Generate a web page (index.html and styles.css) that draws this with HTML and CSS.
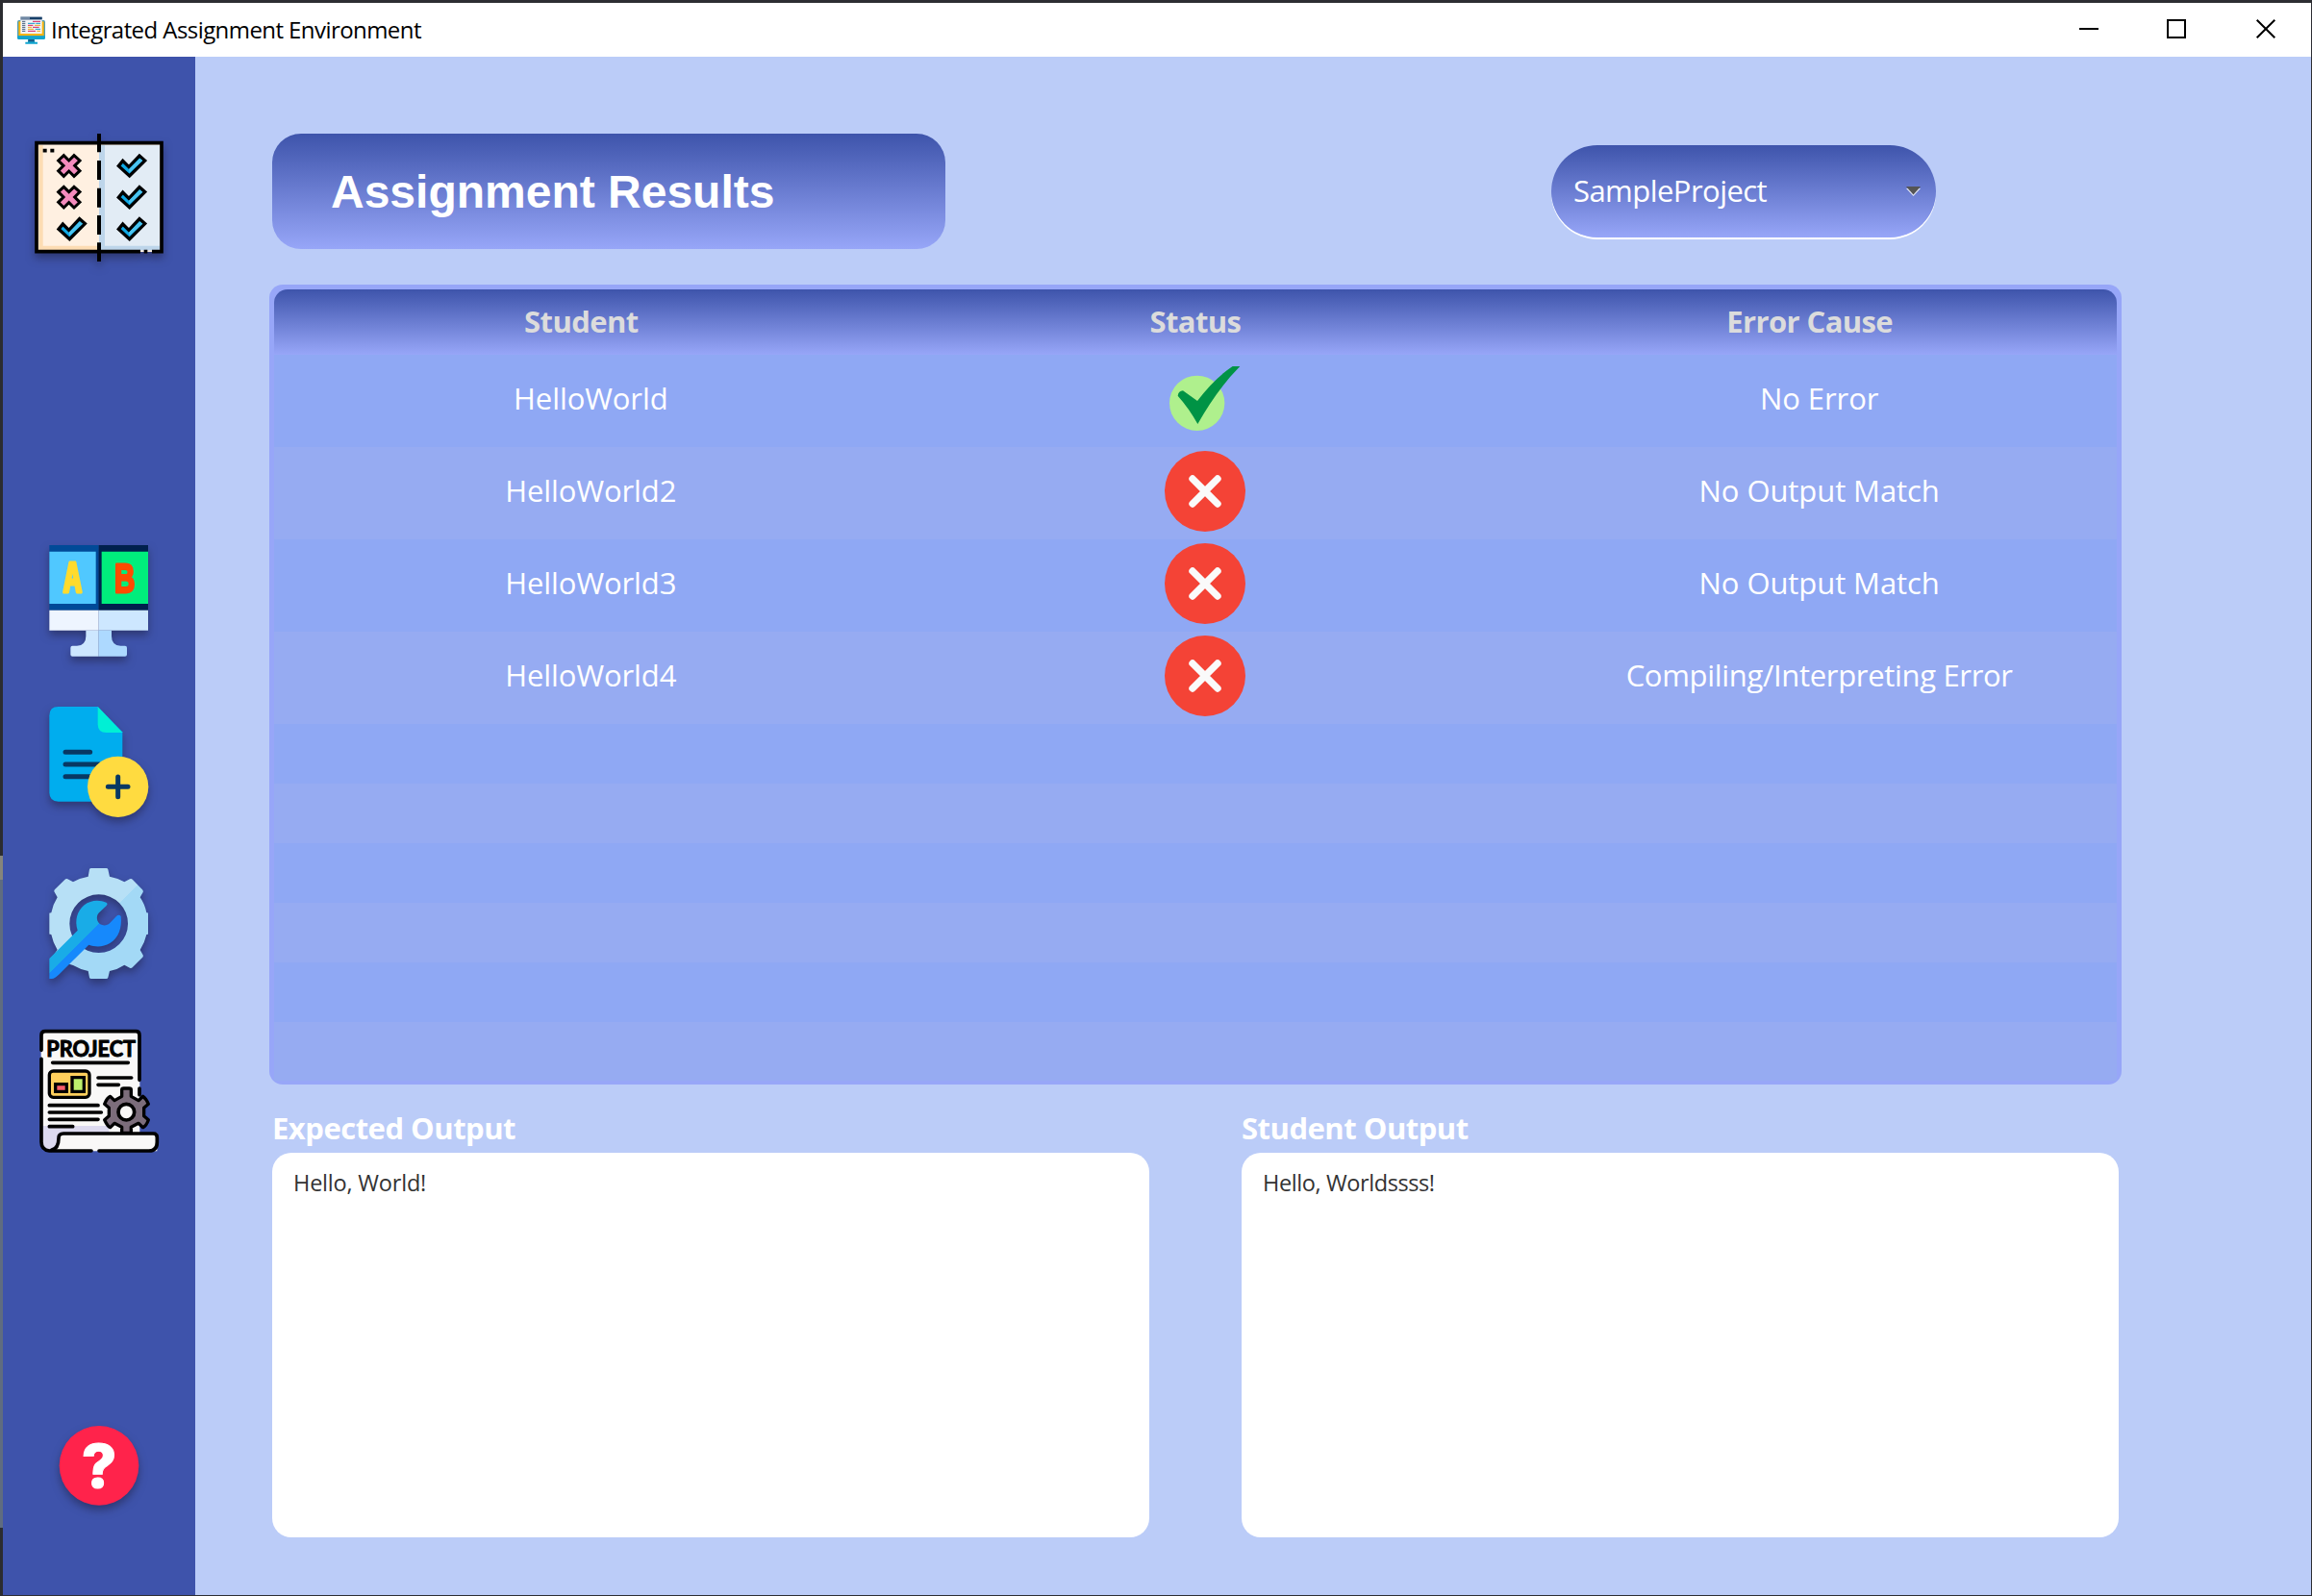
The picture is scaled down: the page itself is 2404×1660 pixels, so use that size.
FILE: index.html
```html
<!DOCTYPE html>
<html lang="en">
<head>
<meta charset="utf-8">
<title>Integrated Assignment Environment</title>
<link rel="stylesheet" href="styles.css">
</head>
<body>
<svg class="defs" width="0" height="0" aria-hidden="true">
  <defs>
    <g id="tick"><path d="M370 518 383 502 402 521 435 486 452 501 404 549Z" fill="#0fa9e6" stroke="#000" stroke-width="10"/><path d="M404 539 445 501 436 494 402 528Z" fill="#4cc4f0"/></g>
    <g id="cross"><path d="M182 501 199 485 215 501 231 485 249 501 233 517 249 533 231 550 215 534 199 550 182 533 198 517Z" fill="#f48bbd" stroke="#000" stroke-width="9"/></g>
    <symbol id="fail" viewBox="0 0 84 84"><circle cx="42" cy="42" r="42" fill="#f44336"/><path d="M29 29 55 55M55 29 29 55" stroke="#fafafa" stroke-width="7.4" stroke-linecap="round"/></symbol>
  </defs>
</svg>
<div class="window">
  <header class="titlebar">
    <svg class="app-icon" viewBox="54 48 87 87">
      <rect x="54" y="60" width="87" height="60" rx="5" fill="#4d9db5"/>
      <rect x="58" y="64" width="79" height="45" fill="#fdb50b"/>
      <path d="M54 109H141V115Q141 120 136 120H59Q54 120 54 115Z" fill="#12a5cf"/>
      <rect x="64" y="49" width="67" height="53" fill="#f1f3f7"/>
      <rect x="64" y="49" width="67" height="10" fill="#6f87a3"/><rect x="93" y="51" width="38" height="6" fill="#173f68"/>
      <path d="M69 64h10M69 70h10M69 76h10M69 82h10M69 88h10M69 94h10" stroke="#405b79" stroke-width="3"/>
      <path d="M102 64h24M87 76h16M102 82h20M87 94h24" stroke="#d5205d" stroke-width="3"/>
      <path d="M87 70h22M112 70h14M110 88h16" stroke="#159bc6" stroke-width="3"/>
      <path d="M108 76h18M87 82h12M87 88h18M115 94h11" stroke="#eca51d" stroke-width="3"/>
      <path d="M88 120h19l2 8h8v6H79v-6h8Z" fill="#12a5cf"/><path d="M88 120h19v7H88Z" fill="#185f89"/>
    </svg>
    <span class="app-name">Integrated Assignment Environment</span>
    <div class="controls">
      <svg class="minimize" viewBox="0 0 20 20"><path d="M0 10H20"/></svg>
      <svg class="maximize" viewBox="0 0 20 20"><path d="M1 1H19V19H1Z"/></svg>
      <svg class="close" viewBox="0 0 20 20"><path d="M.7 .7 19.3 19.3M19.3 .7 .7 19.3"/></svg>
    </div>
  </header>
  <div class="body">
    <nav class="sidebar">
      <svg class="nav-results shadowed" viewBox="9 390 600 450">
        <rect x="114" y="446" width="390" height="340" fill="#fff0e1"/>
        <path d="M121 453H134V767H309V781H121Z" fill="#fddcb3"/>
        <path d="M309 453H498V781H309Z" fill="#e2ecf5"/>
        <path d="M309 453H327V767H498V781H309Z" fill="#bdd5ea"/>
        <path d="M438 785H114V446H504V785H474M449 785H460" fill="none" stroke="#000" stroke-width="11"/>
        <path d="M309 417V475M309 501V561M309 587V647M309 672V732M309 757V816" stroke="#000" stroke-width="12"/>
        <path d="M134 470H146M157 470H169" stroke="#000" stroke-width="11"/>
        <use href="#cross"/><use href="#cross" y="98"/><use href="#tick" x="-187" y="197"/>
        <use href="#tick"/><use href="#tick" y="98"/><use href="#tick" y="197"/>
      </svg>
      <svg class="nav-compare shadowed" viewBox="9 60 600 420">
        <path d="M154 81H308V284H154Z" fill="#004a98"/><path d="M308 81H462V284H308Z" fill="#00204d"/>
        <path d="M154 101H299V264H154Z" fill="#50c8ff"/><path d="M317 101H462V264H317Z" fill="#00ee7c"/>
        <path d="M154 284H308V347H154Z" fill="#eef5ff"/><path d="M308 284H462V347H308Z" fill="#cde7ff"/>
        <path d="M268 347H308V428H226Q220 428 220 422V401Q220 395 226 395H240Q268 393 268 365Z" fill="#cde7ff"/>
        <path d="M348 347H308V428H390Q396 428 396 422V401Q396 395 390 395H376Q348 393 348 365Z" fill="#add9ff"/>
        <text class="glyph-a" x="197" y="228" textLength="58" lengthAdjust="spacingAndGlyphs">A</text>
        <text class="glyph-b" x="357" y="228" textLength="64" lengthAdjust="spacingAndGlyphs">B</text>
      </svg>
      <svg class="nav-add shadowed" viewBox="9 564 600 396">
        <path d="M182 585H305L382 664V881H182Q154 881 154 853V613Q154 585 182 585Z" fill="#00adee"/>
        <path d="M305 585 382 666H332Q305 666 305 640Z" fill="#00f0d5"/>
        <path d="M204 727H281M204 765H310M204 803H290" stroke="#083863" stroke-width="15" stroke-linecap="round"/>
        <circle cx="368" cy="835" r="95" fill="#ffdb40"/>
        <path d="M337 835H399M368 804V866" stroke="#083863" stroke-width="15" stroke-linecap="round"/>
      </svg>
      <svg class="nav-settings shadowed" viewBox="9 75 600 420">
        <defs>
          <linearGradient id="gear-fill" gradientUnits="userSpaceOnUse" x1="208" y1="172" x2="408" y2="372"><stop offset=".5" stop-color="#b7e0f6"/><stop offset=".5" stop-color="#a3d9f6"/></linearGradient>
          <linearGradient id="wrench-fill" gradientUnits="userSpaceOnUse" x1="208" y1="176" x2="408" y2="376"><stop offset=".49" stop-color="#19ace7"/><stop offset=".49" stop-color="#1689fc"/></linearGradient>
          <clipPath id="gear-clip"><path d="M154 90H462V460H154Z"/></clipPath>
        </defs>
        <path clip-path="url(#gear-clip)" fill="url(#gear-fill)" fill-rule="evenodd" d="M275 125 279 103Q280 99 285 99H331Q336 99 337 103L342 125Q365 129 388 142L405 133Q410 131 414 135L444 166Q448 170 446 174L437 190Q452 212 457 238L480 242V302L457 306Q452 330 437 354L446 370Q448 374 444 378L413 409Q409 413 405 410L388 401Q365 416 342 420L337 440Q336 444 331 444H285Q280 444 279 440L275 420Q250 415 228 402L160 380 179 354Q165 331 160 306L137 302V242L160 238Q165 212 179 190L169 172Q168 168 172 164L202 135Q206 131 211 133L228 142Q250 129 275 125ZM308 181A91 91 0 1 0 308 363A91 91 0 1 0 308 181Z"/>
        <path fill="url(#wrench-fill)" d="M333 207Q337 212 332 216L309 238C300 247 301 262 309 271C318 279 333 280 342 271L363 249Q371 241 377 249C381 285 370 317 343 333C323 345 298 346 277 338L185 430Q171 444 162 444H154V381L242 293C232 262 241 232 263 214C283 198 309 196 333 207Z"/>
      </svg>
      <svg class="nav-project" viewBox="9 585 600 420">
        <path d="M128 609H436V925H490V982H150Q128 978 128 958Z" fill="#f9f8f7"/>
        <path d="M134 903H340V927H200Q183 927 183 945Q183 976 158 978Q134 975 134 955Z" fill="#dddaef"/>
        <rect x="154" y="732" width="125" height="82" rx="12" fill="#ffcf5c" stroke="#000" stroke-width="10"/>
        <path d="M173 773H208V796H173Z" fill="#ff5d6c" stroke="#000" stroke-width="10"/>
        <path d="M225 752H262V796H225Z" fill="#bdf06c" stroke="#000" stroke-width="10"/>
        <path d="M164 706H400M306 753H410M306 775H370M154 839H306M154 861H316M154 883H306M154 905H227" stroke="#000" stroke-width="11" stroke-linecap="round"/>
        <path fill="#7c6d7b" stroke="#000" stroke-width="10" stroke-linejoin="round" d="M380 925V907L357 895 344 908Q336 905 326 884L340 872V847L326 835Q334 815 344 811L357 824 380 811V791Q380 786 386 786H403Q409 786 409 791V811L432 824 446 811Q456 818 463 835L449 847V872L463 884Q457 902 446 908L432 895 409 907V925Z"/>
        <circle cx="394" cy="860" r="25" fill="#f9f8f7" stroke="#000" stroke-width="11"/>
        <path d="M285 981H154Q129 977 129 953V694M129 667V620Q129 608 141 608H424Q435 608 435 620V760M435 786V806" fill="none" stroke="#000" stroke-width="11" stroke-linecap="round"/>
        <path d="M160 979Q183 974 183 941Q183 927 198 927H478Q490 927 490 939V954Q490 981 465 981H309" fill="none" stroke="#000" stroke-width="11" stroke-linecap="round"/>
        <text class="glyph-project" x="145" y="686" textLength="278" lengthAdjust="spacingAndGlyphs">PROJECT</text>
      </svg>
      <svg class="nav-help shadowed" viewBox="9 105 600 330">
        <circle cx="309" cy="253" r="124" fill="#ff234b"/>
        <text class="glyph-help" x="254" y="320" textLength="110" lengthAdjust="spacingAndGlyphs">?</text>
      </svg>
    </nav>
    <main class="content">
      <div class="top">
        <h1 class="heading">Assignment Results</h1>
        <div class="combo"><span class="combo-text">SampleProject</span>
          <svg class="arrow" viewBox="0 0 15 10"><path d="M0 2H15L7.5 10Z" fill="#fff" opacity=".8"/><path d="M0 0H15L7.5 8.5Z" fill="#555"/></svg></div>
      </div>
      <section class="table">
        <div class="row head"><span>Student</span><span>Status</span><span>Error Cause</span></div>
        <div class="row"><span>HelloWorld</span><span><svg class="status" viewBox="153 219 252 252"><circle cx="254" cy="358" r="86" fill="#aff08d"/><path d="M194 335Q196 320 210 319L255 351Q309 280 365 243H388Q318 313 256 423Q229 374 194 335Z" fill="#009345"/></svg></span><span>No Error</span></div>
        <div class="row"><span>HelloWorld2</span><span><svg class="status"><use href="#fail"/></svg></span><span>No Output Match</span></div>
        <div class="row"><span>HelloWorld3</span><span><svg class="status"><use href="#fail"/></svg></span><span>No Output Match</span></div>
        <div class="row"><span>HelloWorld4</span><span><svg class="status"><use href="#fail"/></svg></span><span class="long">Compiling/Interpreting Error</span></div>
        <div class="row empty"></div><div class="row empty"></div><div class="row empty"></div>
        <div class="row empty"></div><div class="row empty"></div><div class="row empty"></div>
      </section>
      <div class="outputs">
        <section class="output"><h2>Expected Output</h2><div class="box">Hello, World!</div></section>
        <section class="output"><h2>Student Output</h2><div class="box actual">Hello, Worldssss!</div></section>
      </div>
    </main>
  </div>
</div>
</body>
</html>
```
FILE: styles.css
```css
* { box-sizing: border-box; }
html, body { height: 100%; }
body {
  margin: 0;
  padding: 3px 1px 1px 3px;
  background: linear-gradient(#2b2c30 890px, #85857b 890px, #85857b 915px, #5f6c80 915px, #5f6c80 1589px, #2b2c30 1589px);
  font-family: "Open Sans", "Noto Sans", sans-serif;
  overflow: hidden;
}
.defs { position: absolute; }
.window { height: 1656px; display: flex; flex-direction: column; box-shadow: 0 -3px 0 #2d2e33, 1px 0 0 #2d2e33, 0 1px 0 #2d2e33; }
.titlebar { height: 56px; background: #fff; display: flex; align-items: center; padding: 0 37px 0 15px; color: #000; }
.app-icon { width: 29px; height: 29px; margin-right: 6px; }
.app-name { font-size: 24px; line-height: 32px; letter-spacing: -0.57px; margin-bottom: 1px; }
.controls { margin-left: auto; display: flex; }
.controls svg { width: 20px; height: 20px; margin-bottom: 2px; fill: none; stroke: #000; stroke-width: 2; overflow: visible; }
.controls .maximize { margin: 0 73px 0 71px; }
.body { flex: 1; display: flex; }
.sidebar { width: 200px; background: #3e53ab; display: flex; flex-direction: column; }
.sidebar svg { width: 200px; display: block; flex: none; }
.shadowed { filter: drop-shadow(0 5px 4px rgba(30, 30, 60, .5)); }
.nav-results { height: 150px; margin-top: 71px; }
.nav-compare { height: 140px; margin-top: 280px; }
.nav-add { height: 132px; margin-top: 28px; }
.nav-settings { height: 140px; margin-top: 35px; }
.nav-project { height: 140px; margin-top: 30px; }
.nav-help { height: 110px; margin-top: 270px; }
.glyph-a, .glyph-b { stroke-linejoin: round; }
.glyph-a { font: 700 128px "DejaVu Sans Mono", monospace; fill: #ffdb2d; stroke: #ffdb2d; stroke-width: 9; }
.glyph-b { font: 700 128px "Liberation Sans", sans-serif; fill: #ff4b00; stroke: #ff4b00; stroke-width: 9; }
.glyph-project { font: 700 66px Lato, sans-serif; stroke: #000; stroke-width: 3; stroke-linejoin: round; }
.glyph-help { font: 800 186px Inter, sans-serif; fill: #fff; stroke: #fff; stroke-width: 3; }
.content { flex: 1; background: #bbccf8; padding: 80px 197px 60px 77px; display: flex; flex-direction: column; }
.top { display: flex; justify-content: space-between; align-items: flex-start; padding: 0 193px 0 3px; height: 157px; }
.heading { margin: 0; width: 700px; height: 120px; border-radius: 30px; padding-left: 61px; background: linear-gradient(#3e54ab, #97a6f8); color: #fff; font: 700 48px/121px "Liberation Sans", Arial, sans-serif; }
.combo { width: 400px; height: 96px; margin-top: 12px; border-radius: 48px; padding: 0 16px 0 23px; display: flex; align-items: center; justify-content: space-between; background: linear-gradient(#3e54ab, #97a6f8); box-shadow: 0 2px 0 #fff; color: #fff; font-size: 31px; letter-spacing: -0.55px; }
.combo-text { line-height: 42px; margin-bottom: 2px; }
.arrow { width: 15px; height: 10px; }
.table { width: 1926px; height: 832px; border-radius: 14px; background: #97a6f8; padding: 5px; overflow: hidden; }
.row { height: 96px; padding-bottom: 4px; display: grid; grid-template-columns: repeat(3, 1fr); align-items: center; color: #fff; font-size: 31px; letter-spacing: -0.08px; background: #8fa8f4; }
.row:nth-child(odd) { background: #96abf2; }
.row > span { text-align: center; padding-left: 20px; line-height: 44px; white-space: nowrap; }
.row > span:not(:nth-child(2)) { padding-bottom: 2px; }
.row > .long { letter-spacing: -0.32px; }
.row.head { height: 68px; padding: 0; background: linear-gradient(#3e54ab, #97a6f8); border-radius: 14px 14px 0 0; color: #dcdcdc; font-weight: 700; letter-spacing: -0.6px; }
.row.head > span:nth-child(n) { padding: 0 0 2px; }
.row.empty { height: 62px; padding: 0; }
.row.empty:last-child { height: 61px; }
.status { width: 84px; height: 84px; display: block; margin: 0 auto; }
.outputs { display: flex; gap: 96px; padding: 22px 3px 0; }
.output { width: 912px; }
.output h2 { margin: 0; height: 49px; font-size: 31px; line-height: 46px; letter-spacing: -0.5px; color: #fff; font-weight: 700; }
.box { height: 400px; border-radius: 20px; background: #fff; padding: 14px 22px; color: #333; font-size: 23.5px; line-height: 34px; letter-spacing: -0.2px; }
.box.actual { letter-spacing: -0.4px; }
```
